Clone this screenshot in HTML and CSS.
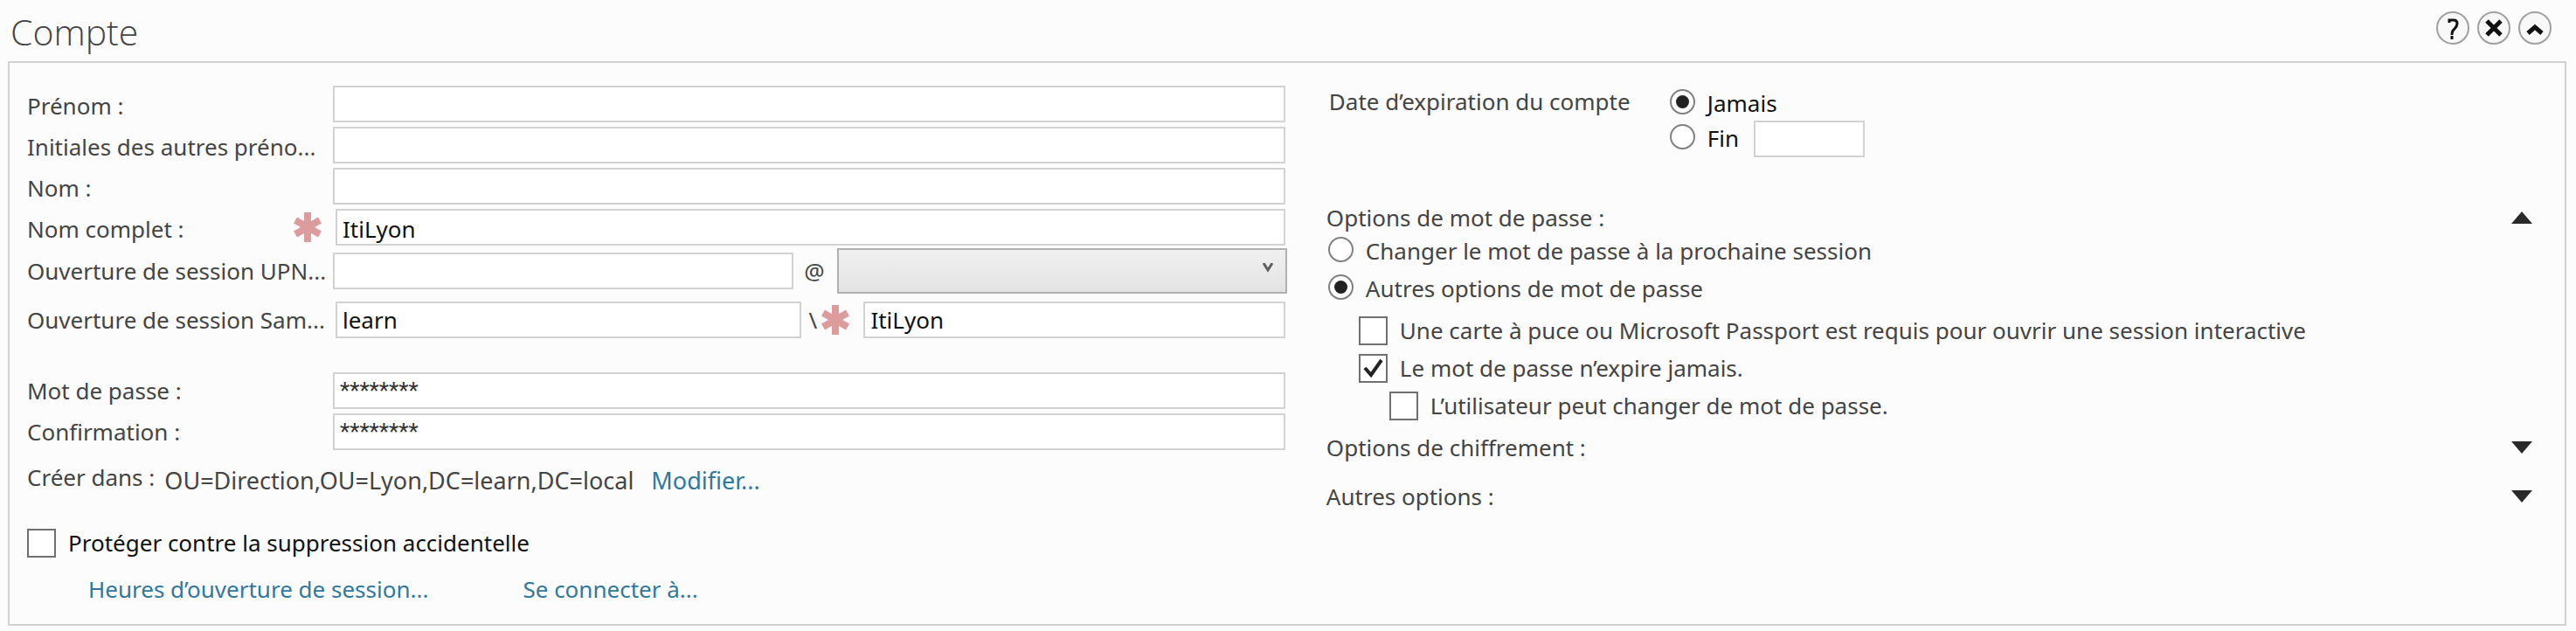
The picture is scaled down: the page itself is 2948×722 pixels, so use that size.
FILE: index.html
```html
<!DOCTYPE html>
<html lang="fr">
  <head>
    <meta charset="UTF-8" />
    <meta name="viewport" content="width=device-width, initial-scale=1.0" />
    <title>Compte</title>
    <link rel="stylesheet" href="styles.css">
  </head>

  <body>
    <header class="section-header">
      <h1>Compte</h1>
      <div class="header-buttons">
        <button type="button" class="round-button" aria-label="Aide">
          <svg viewBox="0 0 38 38" aria-hidden="true">
            <path d="M15 13V10H20Q24 10 24 14Q24 17 21 20Q18 22 18 27" />
            <path d="M18 28V32" />
          </svg>
        </button>
        <button type="button" class="round-button bold" aria-label="Fermer">
          <svg viewBox="0 0 38 38" aria-hidden="true">
            <path d="M11 11L27 27M27 11L11 27" />
          </svg>
        </button>
        <button type="button" class="round-button bold" aria-label="Réduire">
          <svg viewBox="0 0 38 38" aria-hidden="true">
            <path d="M11 25L19 18L27 25" />
          </svg>
        </button>
      </div>
    </header>

    <form class="panel">
      <div class="column">
        <div class="row">
          <label class="name" for="firstName">Prénom :</label>
          <input type="text" class="field" id="firstName" />
        </div>
        <div class="row">
          <label class="name" for="initials">Initiales des autres préno...</label>
          <input type="text" class="field" id="initials" />
        </div>
        <div class="row">
          <label class="name" for="lastName">Nom :</label>
          <input type="text" class="field" id="lastName" />
        </div>
        <div class="row required">
          <label class="name" for="fullName">Nom complet :</label>
          <svg class="star" viewBox="0 0 32 34" aria-hidden="true">
            <path d="M16 0V34M2 9L30 25M30 9L2 25" />
          </svg>
          <input type="text" class="field" id="fullName" value="ItiLyon" />
        </div>
        <div class="row row-upn">
          <label class="name" for="upn">Ouverture de session UPN...</label>
          <input type="text" class="field upn" id="upn" />
          <span class="at">@</span>
          <select class="domain" aria-label="Suffixe UPN">
            <option></option>
          </select>
        </div>
        <div class="row row-sam">
          <label class="name" for="sam">Ouverture de session Sam...</label>
          <input type="text" class="field sam" id="sam" value="learn" />
          <span class="slash">\</span>
          <svg class="star" viewBox="0 0 32 34" aria-hidden="true">
            <path d="M16 0V34M2 9L30 25M30 9L2 25" />
          </svg>
          <input type="text" class="field account" aria-label="Nom du compte" value="ItiLyon" />
        </div>
        <div class="row row-password">
          <label class="name" for="password">Mot de passe :</label>
          <input type="text" class="field masked" id="password" value="********" />
        </div>
        <div class="row row-confirm">
          <label class="name" for="confirm">Confirmation :</label>
          <input type="text" class="field masked" id="confirm" value="********" />
        </div>
        <div class="create-in">
          <span>Créer dans :</span>
          <span class="path">OU=Direction,OU=Lyon,DC=learn,DC=local</span>
          <a href="#" class="path">Modifier...</a>
        </div>
        <label class="choice protect">
          <input type="checkbox" />
          <span>Protéger contre la suppression accidentelle</span>
        </label>
        <div class="links">
          <a href="#">Heures d’ouverture de session...</a>
          <a href="#">Se connecter à...</a>
        </div>
      </div>

      <div class="column column-right">
        <div class="expiry">
          <span class="expiry-name">Date d’expiration du compte</span>
          <div class="expiry-choices">
            <label class="choice dark">
              <input type="radio" name="expiry" checked />
              <span>Jamais</span>
            </label>
            <div class="expiry-end">
              <label class="choice dark">
                <input type="radio" name="expiry" />
                <span>Fin</span>
              </label>
              <input type="text" class="field date" aria-label="Date de fin" />
            </div>
          </div>
        </div>

        <button type="button" class="group-toggle">
          <span>Options de mot de passe :</span>
          <svg class="arrow" viewBox="0 0 24 14" aria-hidden="true">
            <path d="M12 0L24 14H0Z" />
          </svg>
        </button>
        <div class="options">
          <label class="choice">
            <input type="radio" name="passwordOptions" />
            <span>Changer le mot de passe à la prochaine session</span>
          </label>
          <label class="choice">
            <input type="radio" name="passwordOptions" checked />
            <span>Autres options de mot de passe</span>
          </label>
          <div class="sub-options">
            <label class="choice">
              <input type="checkbox" />
              <span>Une carte à puce ou Microsoft Passport est requis pour ouvrir une session interactive</span>
            </label>
            <label class="choice">
              <input type="checkbox" checked />
              <span>Le mot de passe n’expire jamais.</span>
            </label>
            <label class="choice nested">
              <input type="checkbox" />
              <span>L’utilisateur peut changer de mot de passe.</span>
            </label>
          </div>
        </div>
        <button type="button" class="group-toggle">
          <span>Options de chiffrement :</span>
          <svg class="arrow" viewBox="0 0 24 14" aria-hidden="true">
            <path d="M0 0H24L12 14Z" />
          </svg>
        </button>
        <button type="button" class="group-toggle last">
          <span>Autres options :</span>
          <svg class="arrow" viewBox="0 0 24 14" aria-hidden="true">
            <path d="M0 0H24L12 14Z" />
          </svg>
        </button>
      </div>
    </form>
  </body>
</html>
```

FILE: styles.css
```css
* {
  box-sizing: border-box;
}

body {
  margin: 0;
  padding: 0 11px 6px 9px;
  background-color: #fcfcfc;
  color: #444;
  font-family: "Noto Sans", "Open Sans", sans-serif;
  font-size: 26px;
  line-height: 36px;
}

a {
  color: #31789c;
  text-decoration: none;
}

input,
select,
button {
  margin: 0;
  font: inherit;
}

.section-header {
  display: flex;
  justify-content: space-between;
  height: 70px;
  padding: 9px 17px 0 3px;
}

h1 {
  margin: 0;
  font-family: "Open Sans", sans-serif;
  font-size: 41px;
  font-weight: 300;
  line-height: 54px;
}

.header-buttons {
  display: flex;
  gap: 9px;
  padding-top: 4px;
}

.round-button {
  width: 38px;
  height: 38px;
  padding: 0;
  border: 2px solid #a0a0a0;
  border-radius: 50%;
  background-color: #f8f8f8;
}

.round-button svg {
  display: block;
  width: 38px;
  height: 38px;
  margin: -2px;
  fill: none;
  stroke: #111;
  stroke-width: 3;
}

.round-button.bold svg {
  stroke-width: 5;
}

.panel {
  display: grid;
  grid-template-columns: minmax(0, 1.032fr) minmax(0, 1fr);
  gap: 45px;
  min-height: 646px;
  padding: 26px 20px 20px;
  border: 2px solid #d2d2d2;
}

.row {
  display: flex;
  align-items: center;
  height: 42px;
  margin-bottom: 5px;
  padding-right: 2px;
}

.name {
  flex: 0 0 350px;
  padding-top: 4px;
  white-space: nowrap;
}

.field {
  flex: 1;
  min-width: 0;
  height: 42px;
  padding: 3px 6px 0;
  border: 2px solid #d2d2d2;
  background-color: #fff;
  color: #111;
}

.star {
  flex: none;
  width: 32px;
  height: 34px;
  fill: none;
  stroke: #dc9c9c;
  stroke-width: 8;
}

.required .name {
  flex-basis: 305px;
}

.required .star {
  margin-right: 16px;
}

.row-upn {
  height: 52px;
  margin: -2px 0 9px;
  padding-right: 0;
}

.row-upn .name,
.row-sam .name,
.row-password .name,
.row-confirm .name {
  padding-top: 0;
}

.upn {
  flex: 1 1 527px;
}

.at {
  width: 50px;
  padding-right: 2px;
  text-align: center;
}

.domain {
  flex: 1 1 515px;
  align-self: stretch;
  min-width: 0;
  border: 2px solid #b0b0b0;
  appearance: none;
  background: url("data:image/svg+xml,%3Csvg xmlns='http://www.w3.org/2000/svg' viewBox='0 0 12 12'%3E%3Cpath d='M1 0L6 8L11 0' fill='none' stroke='%23606060' stroke-width='3'/%3E%3C/svg%3E") right 14px top 15px / 12px 12px no-repeat, linear-gradient(#f0f0f0, #e3e3e3);
}

.row-sam .name {
  flex-basis: 353px;
}

.sam {
  flex: 1 1 533px;
}

.slash {
  width: 23px;
  padding-left: 8px;
}

.row-sam .star {
  margin-right: 16px;
}

.account {
  flex: 1 1 482px;
}

.row-sam .field {
  padding-top: 0;
}

.row-password {
  margin-top: 39px;
}

.masked {
  padding: 0 6px;
  color: #333;
  font-family: Roboto, sans-serif;
}

.create-in {
  display: flex;
  margin-top: 13px;
  white-space: nowrap;
}

.create-in .path {
  padding-top: 4px;
  font-size: 27px;
}

.create-in span {
  margin-right: 11px;
}

.create-in a {
  margin-left: 9px;
}

.choice {
  display: flex;
  align-items: center;
  gap: 14px;
  white-space: nowrap;
}

.choice input {
  display: grid;
  flex: none;
  place-items: center;
  appearance: none;
  background-color: #fff;
}

.choice input[type="radio"] {
  width: 29px;
  height: 29px;
  border: 2px solid #808080;
  border-radius: 50%;
}

.choice input[type="radio"]:checked::before {
  width: 15px;
  height: 15px;
  border-radius: 50%;
  background-color: #222;
  content: "";
}

.choice input[type="radio"] + span {
  margin: 2px 0 -2px;
}

.choice input[type="checkbox"] {
  width: 33px;
  height: 33px;
  border: 2px solid #707070;
}

.choice input[type="checkbox"]:checked {
  background: #fff url("data:image/svg+xml,%3Csvg xmlns='http://www.w3.org/2000/svg' viewBox='0 0 29 29'%3E%3Cpath d='M5 14L12 22L24 5' fill='none' stroke='%23222' stroke-width='4'/%3E%3C/svg%3E") center / 29px 29px no-repeat;
}

.dark {
  color: #111;
}

.protect {
  margin-top: 35px;
  color: #111;
}

.links {
  display: flex;
  gap: 108px;
  margin-top: 17px;
  padding-left: 70px;
}

.column-right {
  padding-right: 17px;
}

.expiry {
  display: flex;
  height: 133px;
}

.expiry-name {
  width: 355px;
  margin-right: 38px;
  padding-left: 3px;
  white-space: nowrap;
}

.expiry-end {
  display: flex;
  align-items: flex-start;
  gap: 17px;
  margin-top: 4px;
}

.date {
  flex: 0 0 127px;
}

.group-toggle {
  display: flex;
  align-items: center;
  justify-content: space-between;
  width: 100%;
  height: 36px;
  padding: 0;
  border: 0;
  background: none;
  color: inherit;
}

.arrow {
  width: 24px;
  height: 14px;
  fill: #2a2a2a;
}

.options,
.sub-options {
  display: flex;
  flex-direction: column;
  gap: 7px;
}

.options {
  margin-bottom: 12px;
  padding-left: 2px;
}

.sub-options {
  margin-top: 7px;
  padding-left: 35px;
}

.nested {
  padding-left: 35px;
}

.last {
  margin-top: 20px;
}
```
